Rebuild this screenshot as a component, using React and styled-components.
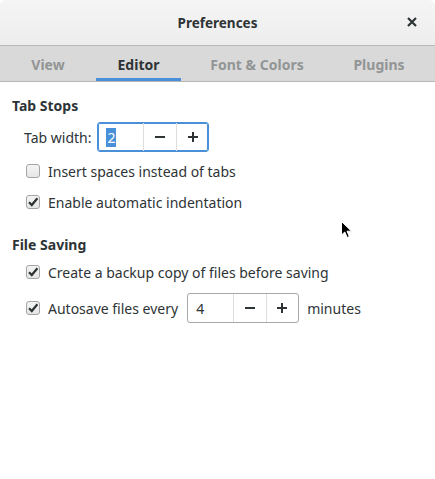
import React from 'react';
import styled, { createGlobalStyle } from 'styled-components';

const GlobalStyle = createGlobalStyle`
  html, body {
    margin: 0;
    padding: 0;
    background: #ffffff;
  }
  body {
    font-family: "Noto Sans", "Open Sans", sans-serif;
    font-size: 14px;
    color: #2e3436;
  }
`;

const Window = styled.div`
  position: relative;
  width: 435px;
  height: 479px;
  background: #ffffff;
  overflow: hidden;
`;

const HeaderBar = styled.div`
  height: 45px;
  display: flex;
  align-items: center;
  justify-content: center;
  position: relative;
  background: linear-gradient(to bottom, #f5f5f5, #ededed);
  border-bottom: 1px solid #b8b8b8;
  border-radius: 6px 6px 0 0;
`;

const Title = styled.div`
  font-weight: bold;
  font-size: 13.5px;
  color: #2e3436;
`;

const CloseButton = styled.div`
  position: absolute;
  right: 16px;
  top: 15px;
  width: 14px;
  height: 14px;
  display: flex;
  align-items: center;
  justify-content: center;
`;

const TabBar = styled.div`
  height: 35px;
  display: flex;
  background: #d9d9d9;
  border-bottom: 1px solid #b6b6b6;
`;

const Tab = styled.div`
  width: ${p => p.$w}px;
  display: flex;
  align-items: center;
  justify-content: center;
  font-weight: bold;
  color: ${p => (p.$active ? '#2e3436' : '#929595')};
  box-shadow: ${p => (p.$active ? 'inset 0 -3px 0 #4a90d9' : 'none')};
  padding-top: 2px;
  box-sizing: border-box;
`;

const Content = styled.div`
  padding: 15px 12px 0 12px;
  display: flex;
  flex-direction: column;
`;

const SectionTitle = styled.div`
  height: 18px;
  line-height: 18px;
  font-weight: bold;
  margin-top: ${p => p.$mt || 0}px;
`;

const Row = styled.div`
  display: flex;
  align-items: center;
  height: ${p => p.$h || 18}px;
  margin-top: ${p => p.$mt || 0}px;
  padding-left: ${p => p.$indent || 0}px;
`;

const Label = styled.span`
  margin-right: ${p => p.$mr || 0}px;
  margin-left: ${p => p.$ml || 0}px;
  white-space: nowrap;
`;

const Box = styled.span`
  width: 14px;
  height: 14px;
  box-sizing: border-box;
  border: 1px solid #a4a4a4;
  border-radius: 3px;
  background: linear-gradient(to bottom, #f4f4f4, #e6e6e6);
  display: inline-flex;
  align-items: center;
  justify-content: center;
  margin-right: 8px;
  flex: none;
`;

const Spin = styled.div`
  display: flex;
  width: 112px;
  height: 30px;
  flex: none;
  box-sizing: border-box;
  border: 1px solid ${p => (p.$focus ? '#4a90d9' : '#a8a8a8')};
  box-shadow: ${p => (p.$focus ? 'inset 0 0 0 1px #4a90d9' : 'none')};
  border-radius: 3px;
  background: #ffffff;
`;

const SpinEntry = styled.div`
  width: 46px;
  display: flex;
  align-items: center;
  padding-left: 8px;
  box-sizing: border-box;
  border-right: 1px solid #dedede;
`;

const Selected = styled.span`
  background: #4a90d9;
  color: #ffffff;
  padding: 0 1px;
  line-height: 19px;
`;

const SpinButton = styled.div`
  flex: 1;
  display: flex;
  align-items: center;
  justify-content: center;
  border-left: ${p => (p.$divided ? '1px solid #dedede' : 'none')};
  color: #2e3436;
`;

const Pointer = styled.svg`
  position: absolute;
  left: 340px;
  top: 220px;
`;

function Check({ checked }) {
  return (
    <Box>
      {checked && (
        <svg width="12" height="12" viewBox="0 0 12 12">
          <path d="M2 6.2 L4.8 9 L10.4 2.2" fill="none" stroke="#2e3436" strokeWidth="2.2" />
        </svg>
      )}
    </Box>
  );
}

function SpinBox({ value, focus }) {
  return (
    <Spin $focus={focus}>
      <SpinEntry>{focus ? <Selected>{value}</Selected> : value}</SpinEntry>
      <SpinButton>
        <svg width="12" height="12" viewBox="0 0 12 12">
          <rect x="1" y="5" width="10" height="2" fill="#2e3436" />
        </svg>
      </SpinButton>
      <SpinButton $divided>
        <svg width="12" height="12" viewBox="0 0 12 12">
          <rect x="1" y="5" width="10" height="2" fill="#2e3436" />
          <rect x="5" y="1" width="2" height="10" fill="#2e3436" />
        </svg>
      </SpinButton>
    </Spin>
  );
}

export default function App() {
  return (
    <Window>
      <GlobalStyle />
      <HeaderBar>
        <Title>Preferences</Title>
        <CloseButton>
          <svg width="10" height="10" viewBox="0 0 10 10">
            <path d="M1 1 L9 9 M9 1 L1 9" stroke="#2e3436" strokeWidth="2.2" />
          </svg>
        </CloseButton>
      </HeaderBar>
      <TabBar>
        <Tab $w={96}>View</Tab>
        <Tab $w={85} $active>Editor</Tab>
        <Tab $w={152}>Font &amp; Colors</Tab>
        <Tab $w={92}>Plugins</Tab>
      </TabBar>
      <Content>
        <SectionTitle>Tab Stops</SectionTitle>
        <Row $h={30} $mt={7} $indent={12}>
          <Label $mr={6}>Tab width:</Label>
          <SpinBox value="2" focus />
        </Row>
        <Row $mt={10} $indent={14}>
          <Check />
          <Label>Insert spaces instead of tabs</Label>
        </Row>
        <Row $mt={13} $indent={14}>
          <Check checked />
          <Label>Enable automatic indentation</Label>
        </Row>
        <SectionTitle $mt={25}>File Saving</SectionTitle>
        <Row $mt={9} $indent={14}>
          <Check checked />
          <Label>Create a backup copy of files before saving</Label>
        </Row>
        <Row $h={30} $mt={12} $indent={14}>
          <Check checked />
          <Label $mr={9}>Autosave files every</Label>
          <SpinBox value="4" />
          <Label $ml={8}>minutes</Label>
        </Row>
      </Content>
      <Pointer width="14" height="20" viewBox="0 0 14 20">
        <path d="M1.5 1.5 L1.5 15 L4.8 12 L7.2 17.5 L9.3 16.5 L7 11.2 L11.5 11.2 Z" fill="#000" stroke="#fff" strokeWidth="1" />
      </Pointer>
    </Window>
  );
}
